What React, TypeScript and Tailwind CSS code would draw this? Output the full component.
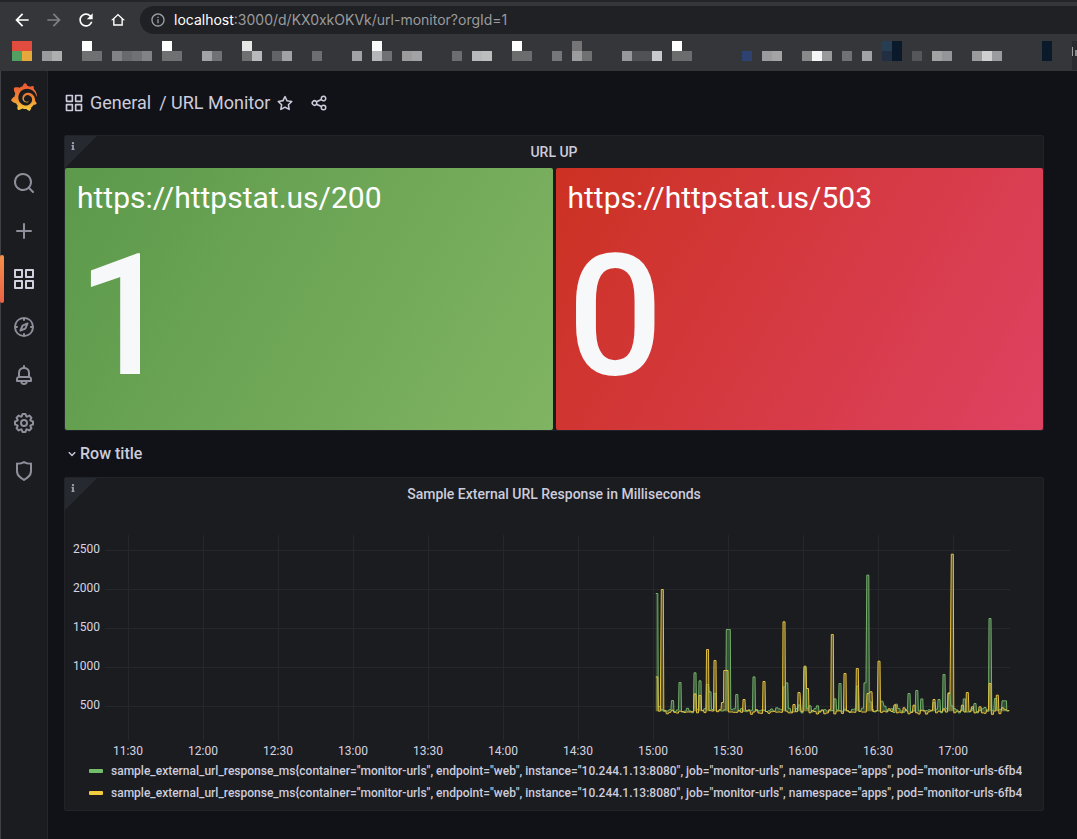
import { FaInfo } from "react-icons/fa";
import { MdArrowBack, MdArrowForward, MdInfoOutline, MdRefresh } from "react-icons/md";
import { SiGrafana } from "react-icons/si";

const paths = {
  apps: "M10,13H3a1,1,0,0,0-1,1v7a1,1,0,0,0,1,1h7a1,1,0,0,0,1-1V14A1,1,0,0,0,10,13ZM9,20H4V15H9ZM21,2H14a1,1,0,0,0-1,1v7a1,1,0,0,0,1,1h7a1,1,0,0,0,1-1V3A1,1,0,0,0,21,2ZM20,9H15V4h5Zm1,4H14a1,1,0,0,0-1,1v7a1,1,0,0,0,1,1h7a1,1,0,0,0,1-1V14A1,1,0,0,0,21,13Zm-1,7H15V15h5ZM10,2H3A1,1,0,0,0,2,3v7a1,1,0,0,0,1,1h7a1,1,0,0,0,1-1V3A1,1,0,0,0,10,2ZM9,9H4V4H9Z",
  search: "M21.71,20.29,18,16.61A9,9,0,1,0,16.61,18l3.68,3.68a1,1,0,0,0,1.42,0A1,1,0,0,0,21.71,20.29ZM11,18a7,7,0,1,1,7-7A7,7,0,0,1,11,18Z",
  plus: "M19,11H13V5a1,1,0,0,0-2,0v6H5a1,1,0,0,0,0,2h6v6a1,1,0,0,0,2,0V13h6a1,1,0,0,0,0-2Z",
  compass: "M12,2A10,10,0,1,0,22,12,10,10,0,0,0,12,2Zm1,17.93V19a1,1,0,0,0-2,0v.93A8,8,0,0,1,4.07,13H5a1,1,0,0,0,0-2H4.07A8,8,0,0,1,11,4.07V5a1,1,0,0,0,2,0V4.07A8,8,0,0,1,19.93,11H19a1,1,0,0,0,0,2h.93A8,8,0,0,1,13,19.93ZM15.14,7.55l-5,2.12a1,1,0,0,0-.52.52l-2.12,5a1,1,0,0,0,.21,1.1,1,1,0,0,0,.7.3.93.93,0,0,0,.4-.09l5-2.12a1,1,0,0,0,.52-.52l2.12-5a1,1,0,0,0-1.31-1.31Zm-2.49,5.1-2.28,1,1-2.28,2.28-1Z",
  bell: "M18,13.18V10a6,6,0,0,0-5-5.91V3a1,1,0,0,0-2,0V4.09A6,6,0,0,0,6,10v3.18A3,3,0,0,0,4,16v2a1,1,0,0,0,1,1H8.14a4,4,0,0,0,7.72,0H19a1,1,0,0,0,1-1V16A3,3,0,0,0,18,13.18ZM8,10a4,4,0,0,1,8,0v3H8Zm4,10a2,2,0,0,1-1.72-1h3.44A2,2,0,0,1,12,20Zm6-3H6V16a1,1,0,0,1,1-1H17a1,1,0,0,1,1,1Z",
  cog: "M21.32,9.55l-1.89-.63.89-1.78A1,1,0,0,0,20.13,6L18,3.87a1,1,0,0,0-1.15-.19l-1.78.89-.63-1.89A1,1,0,0,0,13.5,2h-3a1,1,0,0,0-.95.68L8.92,4.57,7.14,3.68A1,1,0,0,0,6,3.87L3.87,6a1,1,0,0,0-.19,1.15l.89,1.78-1.89.63A1,1,0,0,0,2,10.5v3a1,1,0,0,0,.68.95l1.89.63-.89,1.78A1,1,0,0,0,3.87,18L6,20.13a1,1,0,0,0,1.15.19l1.78-.89.63,1.89a1,1,0,0,0,.95.68h3a1,1,0,0,0,.95-.68l.63-1.89,1.78.89A1,1,0,0,0,18,20.13L20.13,18a1,1,0,0,0,.19-1.15l-.89-1.78,1.89-.63A1,1,0,0,0,22,13.5v-3A1,1,0,0,0,21.32,9.55ZM20,12.78l-1.2.4A2,2,0,0,0,17.64,16l.57,1.14-1.1,1.1L16,17.64a2,2,0,0,0-2.79,1.16l-.4,1.2H11.22l-.4-1.2A2,2,0,0,0,8,17.64l-1.14.57-1.1-1.1L6.36,16A2,2,0,0,0,5.2,13.18L4,12.78V11.22l1.2-.4A2,2,0,0,0,6.36,8L5.79,6.89l1.1-1.1L8,6.36A2,2,0,0,0,10.82,5.2l.4-1.2h1.56l.4,1.2A2,2,0,0,0,16,6.36l1.14-.57,1.1,1.1L17.64,8a2,2,0,0,0,1.16,2.79l1.2.4ZM12,8a4,4,0,1,0,4,4A4,4,0,0,0,12,8Zm0,6a2,2,0,1,1,2-2A2,2,0,0,1,12,14Z",
  shield: "M19.63,3.65a1,1,0,0,0-.84-.2,8,8,0,0,1-6.22-1.27,1,1,0,0,0-1.14,0A8,8,0,0,1,5.21,3.45a1,1,0,0,0-.84.2A1,1,0,0,0,4,4.43v7.45a9,9,0,0,0,3.77,7.33l3.65,2.6a1,1,0,0,0,1.16,0l3.65-2.6A9,9,0,0,0,20,11.88V4.43A1,1,0,0,0,19.63,3.65ZM18,11.88a7,7,0,0,1-2.93,5.7L12,19.77,8.93,17.58A7,7,0,0,1,6,11.88V5.58a10,10,0,0,0,6-1.39,10,10,0,0,0,6,1.39Z",
  star: "M22,9.67A1,1,0,0,0,21.14,9l-5.69-.83L12.9,3a1,1,0,0,0-1.8,0L8.55,8.16,2.86,9a1,1,0,0,0-.81.68,1,1,0,0,0,.25,1l4.13,4-1,5.68A1,1,0,0,0,6.9,21.44L12,18.77l5.1,2.67a.93.93,0,0,0,.46.12,1,1,0,0,0,.59-.19,1,1,0,0,0,.4-1l-1-5.68,4.13-4A1,1,0,0,0,22,9.67Zm-6.15,4a1,1,0,0,0-.29.88l.72,4.2-3.76-2a1.06,1.06,0,0,0-.94,0l-3.76,2,.72-4.2a1,1,0,0,0-.29-.88l-3-3,4.21-.61a1,1,0,0,0,.76-.55L12,5.7l1.88,3.82a1,1,0,0,0,.76.55l4.21.61Z",
  share: "M18,14a4,4,0,0,0-3.08,1.48l-5.1-2.35a3.64,3.64,0,0,0,0-2.26l5.1-2.35A4,4,0,1,0,14,6a4.17,4.17,0,0,0,.07.71L8.79,9.14a4,4,0,1,0,0,5.72l5.28,2.43A4.17,4.17,0,0,0,14,18a4,4,0,1,0,4-4ZM18,4a2,2,0,1,1-2,2A2,2,0,0,1,18,4ZM6,14a2,2,0,1,1,2-2A2,2,0,0,1,6,14Zm12,6a2,2,0,1,1,2-2A2,2,0,0,1,18,20Z",
  angleDown: "M17,9.17a1,1,0,0,0-1.41,0L12,12.71,8.46,9.17a1,1,0,0,0-1.41,0,1,1,0,0,0,0,1.42l4.24,4.24a1,1,0,0,0,1.42,0L17,10.59A1,1,0,0,0,17,9.17Z",
  home: "M12 5.2l5.2 5V18.400H6.800V10.200l5.200-5M12 2.500L1.500 12.500H4.700V20.500H19.300V12.500H22.500L12 2.500z",
};

function Icon({ name, className }: { name: keyof typeof paths; className: string }) {
  return (
    <svg viewBox="0 0 24 24" fill="currentColor" aria-hidden="true" className={className}>
      <path d={paths[name]} />
    </svg>
  );
}

/* Bookmark tiles: x, row (0 top, 1 bottom), width, colour */
const tiles: [number, number, number, string][] = [
  [12, 0, 20, "#e24c3f"], [12, 1, 10, "#53a063"], [22, 1, 10, "#e6a83b"],
  [42, 1, 10, "#9a9a9c"], [52, 1, 10, "#adaeb0"],
  [82, 0, 10, "#ffffff"], [82, 1, 20, "#6f7072"],
  [112, 1, 10, "#828284"], [122, 1, 10, "#68696d"], [132, 1, 10, "#707174"], [142, 1, 10, "#828284"],
  [162, 0, 10, "#ffffff"], [162, 1, 20, "#6f7072"],
  [202, 1, 10, "#a2a2a5"], [212, 1, 10, "#707174"],
  [242, 0, 10, "#e6e6e6"], [242, 1, 10, "#6f7072"], [252, 1, 10, "#b8b9bb"],
  [272, 1, 10, "#626367"], [282, 1, 10, "#a2a2a5"], [312, 1, 10, "#6d6e71"], [352, 1, 10, "#a2a2a5"],
  [372, 0, 10, "#fafafa"], [372, 1, 10, "#b5b6b9"], [382, 1, 10, "#6f7072"],
  [402, 1, 10, "#9b9b9d"], [412, 1, 10, "#a2a2a5"], [452, 1, 10, "#6c6d6f"],
  [472, 1, 10, "#b8b8ba"], [482, 1, 10, "#bcbdbf"],
  [512, 0, 10, "#ffffff"], [512, 1, 20, "#6b6c6e"], [552, 1, 10, "#757679"],
  [572, 0, 10, "#757577"], [572, 1, 10, "#9c9c9e"], [582, 1, 10, "#6f7072"],
  [622, 1, 10, "#979799"], [632, 1, 20, "#505154"], [652, 1, 10, "#c8c9cb"],
  [672, 0, 10, "#ffffff"], [672, 1, 20, "#6b6c6e"],
  [742, 1, 10, "#2e4272"], [762, 1, 10, "#9b9b9d"], [772, 1, 10, "#a4a4a6"],
  [802, 1, 10, "#88898b"], [812, 1, 10, "#f6f6f6"], [822, 1, 10, "#98999b"],
  [842, 1, 10, "#707174"], [862, 1, 10, "#a2a2a5"],
  [882, 0, 10, "#263d52"], [882, 1, 10, "#222e42"], [892, 0, 10, "#0a1a2a"], [892, 1, 10, "#0a1a2a"],
  [912, 1, 10, "#55565a"], [932, 1, 10, "#a2a2a5"], [942, 1, 10, "#949597"],
  [972, 1, 10, "#9b9b9d"], [982, 1, 10, "#cfcfcf"], [992, 1, 10, "#9b9b9d"],
  [1042, 0, 10, "#0a1a2a"], [1042, 1, 10, "#0a1a2a"],
];

function BrowserBar() {
  return (
    <header className="overflow-hidden border-t-2 border-[#242528] bg-[#35363a]">
      <div className="flex items-center pt-1 pl-3 text-white">
        <div className="flex items-center gap-3">
          <button aria-label="Back"><MdArrowBack className="size-5" /></button>
          <button aria-label="Forward" className="text-[#808184]"><MdArrowForward className="size-5" /></button>
          <button aria-label="Reload"><MdRefresh className="size-5" /></button>
          <button aria-label="Home" className="grid size-5 place-items-center"><Icon name="home" className="size-4" /></button>
        </div>
        <label className="ml-3 flex h-7 flex-1 items-center rounded-l-full bg-[#202124] pl-2.5 font-['Inter','Roboto',sans-serif] text-sm">
          <MdInfoOutline className="mr-2 size-4 text-[#9aa0a6]" />
          <span>localhost</span>
          <input aria-label="Address" defaultValue=":3000/d/KX0xkOKVk/url-monitor?orgId=1" className="min-w-0 flex-1 bg-transparent text-[#9a9b9e] outline-none" />
        </label>
      </div>
      <svg width="1077" height="37" viewBox="0 34 1077 37" shapeRendering="crispEdges" aria-hidden="true" className="block">
        {tiles.map(([x, row, w, fill]) => (
          <rect key={`${x}-${row}`} x={x} y={41 + row * 10} width={w} height="10" fill={fill} />
        ))}
        <rect x="1072" y="41" width="5" height="29" fill="#2a2b2e" />
        <rect x="1072" y="47" width="1" height="9" fill="#a0a0a2" />
        <rect x="1075" y="50" width="2" height="6" fill="#8a8b8d" />
      </svg>
    </header>
  );
}

const navItems: { name: keyof typeof paths; label: string; active?: boolean }[] = [
  { name: "search", label: "Search dashboards" },
  { name: "plus", label: "Create" },
  { name: "apps", label: "Dashboards", active: true },
  { name: "compass", label: "Explore" },
  { name: "bell", label: "Alerting" },
  { name: "cog", label: "Configuration" },
  { name: "shield", label: "Server Admin" },
];

function Sidebar() {
  return (
    <nav className="w-[47px] shrink-0 border-r border-[#25272b] bg-[#1b1c20]">
      <a href="#home" aria-label="Grafana" className="mb-12 flex justify-center pt-3">
        <svg width="0" height="0" className="absolute">
          <linearGradient id="flame" x1="0" y1="0" x2="0" y2="1">
            <stop offset="0.1" stopColor="#ec5b33" />
            <stop offset="0.55" stopColor="#f08a35" />
            <stop offset="1" stopColor="#f9cf3a" />
          </linearGradient>
        </svg>
        <SiGrafana fill="url(#flame)" className="size-7" />
      </a>
      {navItems.map((item) => (
        <a
          key={item.name}
          href={`#${item.name}`}
          aria-label={item.label}
          className={
            item.active
              ? "relative flex h-12 items-center justify-center text-[#d0d0de]"
              : "flex h-12 items-center justify-center text-[#8f8f9b]"
          }
        >
          {item.active && (
            <span className="absolute top-0 -left-px h-full w-1 rounded-xs bg-linear-to-b from-[#f59049] to-[#ec6147]" />
          )}
          <Icon name={item.name} className="size-6" />
        </a>
      ))}
    </nav>
  );
}

function PanelHeader({ title }: { title: string }) {
  return (
    <div className="relative flex h-8 items-center justify-center">
      <span className="absolute top-0 left-0 size-8 bg-[#262930] [clip-path:polygon(0_0,100%_0,0_100%)]" />
      <FaInfo aria-hidden="true" className="absolute top-1.5 left-1 size-2 text-[#a0a0ae]" />
      <h2 className="text-sm font-medium">{title}</h2>
    </div>
  );
}

const stats = [
  { title: "https://httpstat.us/200", value: "1", fill: "bg-[linear-gradient(120deg,#5c994b,#80b462)]" },
  { title: "https://httpstat.us/503", value: "0", fill: "bg-[linear-gradient(120deg,#cc3122,#de4262)]" },
];

/* Chart geometry */
const toX = (minute: number) => 575 + minute * 2.5;
const toY = (ms: number) => 196.500 - (ms - 500) * 0.078;

/* Outliers, as [minute, response in ms] */
const greenPeaks: [number, number][] = [
  [6.7, 1949], [7.7, 500], [13, 577], [16, 808], [22, 932], [24, 829], [27, 782], [28, 688], [30, 667],
  [34.9, 1487], [35.7, 1487], [38.7, 654], [45.6, 880], [54.7, 483], [57.7, 752], [58.7, 803],
  [63.7, 521], [66, 1000], [68, 509], [71, 509], [78, 598], [80, 795], [87, 761], [90, 803],
  [91.1, 2184], [92.1, 560], [96.7, 568], [98, 504], [102.5, 530], [107.6, 667], [110.7, 705],
  [112.7, 598], [117.6, 551], [119.6, 590], [121.6, 910], [123.6, 675], [124.7, 509], [129.7, 598],
  [134, 538], [138, 487], [140, 1628], [142.2, 603], [145.2, 573], [146.2, 573],
];
const yellowPeaks: [number, number][] = [
  [6.7, 880], [7.7, 440], [8.9, 2000], [22, 662], [24, 641], [27, 1231], [30, 1090], [33, 551], [33.900, 962],
  [34.8, 962], [41.6, 590], [49.6, 821], [57.6, 1586], [61.6, 526], [63.6, 680], [66, 1017],
  [67, 731], [76.9, 1423], [82, 923], [86.9, 987], [91.2, 667], [92.4, 688], [95.6, 1081],
  [99.6, 470], [102, 521], [105.6, 483], [109.6, 517], [117.6, 590], [121.6, 470], [123.600, 667],
  [124.9, 2453], [129, 517], [130.9, 680], [133, 496], [136, 496], [140, 795], [142.9, 645],
  [145, 483], [147.3, 449],
];

/* Fills the minutes between outliers with ordinary samples and draws the steps */
function tracePath(peaks: [number, number][], base: number, seed: number) {
  const points: [number, number][] = [];
  peaks.forEach(([m, ms], i) => {
    points.push([m, ms]);
    const next = i + 1 < peaks.length ? peaks[i + 1][0] : 148;
    const count = Math.round(next - m) - 1;
    for (let k = 1; k <= count; k++) {
      const t = m + ((next - m) * k) / (count + 1);
      points.push([t, base + Math.sin(t * 1.7 + seed) * 16 + Math.sin(t * 4.3 + seed * 2) * 15]);
    }
  });
  return points
    .map(([m, ms], i) => `${i ? "L" : "M"}${toX(m - 0.400).toFixed(1)} ${toY(ms).toFixed(1)}H${toX(m + 0.400).toFixed(1)}`)
    .join("");
}

const greenLine = tracePath(greenPeaks, 448, 1);
const yellowLine = tracePath(yellowPeaks, 430, 4);
const closeArea = `V${toY(440)}H${toX(6.3)}Z`;

const yTicks = [2500, 2000, 1500, 1000, 500];
const xTicks = ["11:30", "12:00", "12:30", "13:00", "13:30", "14:00", "14:30", "15:00", "15:30", "16:00", "16:30", "17:00"];

function ResponseChart() {
  return (
    <svg viewBox="0 0 978 250" role="img" aria-label="Response time chart" className="block w-full">
      <g stroke="#26272b" shapeRendering="crispEdges">
        {yTicks.map((t, i) => <line key={t} x1="40" x2="945" y1={40.500 + i * 39} y2={40.500 + i * 39} />)}
        {xTicks.map((t, i) => <line key={t} x1={63.500 + i * 75} x2={63.500 + i * 75} y1="25" y2="231" />)}
      </g>
      <g fill="#d4d4e2" fontSize="12">
        {yTicks.map((t, i) => <text key={t} x="35" y={43 + i * 39} textAnchor="end">{t}</text>)}
        {xTicks.map((t, i) => <text key={t} x={63 + i * 75} y="245" textAnchor="middle">{t}</text>)}
      </g>
      <g fillOpacity="0.3">
        <path d={greenLine + closeArea} fill="#73bf69" />
        <path d={yellowLine + closeArea} fill="#f2cc3d" />
      </g>
      <g fill="none" strokeWidth="1" strokeLinejoin="round">
        <path d={greenLine} stroke="#73b069" />
        <path d={yellowLine} stroke="#e3c040" />
      </g>
    </svg>
  );
}

const seriesLabel =
  'sample_external_url_response_ms{container="monitor-urls", endpoint="web", instance="10.244.1.13:8080", job="monitor-urls", namespace="apps", pod="monitor-urls-6fb4';

export default function App() {
  return (
    <div className="flex min-h-screen flex-col bg-[#111217] font-['Roboto',sans-serif] text-[#ccccdc]">
      <BrowserBar />
      <div className="flex flex-1 border-l border-[#404146]">
        <Sidebar />
        <main className="min-w-0 flex-1 pr-[33px] pl-4">
          <div className="flex h-16 items-center text-lg">
            <Icon name="apps" className="mr-1.5 size-5" />
            <h1 className="flex gap-2">
              <a href="#general">General</a>
              <a href="#dashboard">/ URL Monitor</a>
            </h1>
            <button aria-label="Mark as favorite" className="ml-1.5"><Icon name="star" className="size-[18px]" /></button>
            <button aria-label="Share dashboard" className="ml-4"><Icon name="share" className="size-[18px]" /></button>
          </div>

          <section className="rounded-xs border border-[#222328] bg-[#1b1c20]">
            <PanelHeader title="URL UP" />
            <div className="grid grid-cols-2 gap-[3px]">
              {stats.map((s) => (
                <div key={s.title} className={`h-[262px] rounded-xs px-3 pt-2 text-[#f7f8fa] ${s.fill}`}>
                  <div className="text-[30px] leading-11 text-white">{s.title}</div>
                  <div className="text-[168px] leading-[194px] font-medium">{s.value}</div>
                </div>
              ))}
            </div>
          </section>

          <button className="flex h-[46px] items-center text-base font-medium">
            <Icon name="angleDown" className="size-4" />
            Row title
          </button>

          <section className="rounded-xs border border-[#222328] bg-[#1b1c20] pb-1.5">
            <PanelHeader title="Sample External URL Response in Milliseconds" />
            <ResponseChart />
            <ul className="mr-2 ml-6 text-xs leading-[22px] font-medium">
              <li className="flex items-center gap-2">
                <span className="h-1 w-3.5 shrink-0 rounded-[1px] bg-[#73bf69]" />
                <span className="overflow-hidden whitespace-nowrap">{seriesLabel}</span>
              </li>
              <li className="flex items-center gap-2">
                <span className="h-1 w-3.5 shrink-0 rounded-[1px] bg-[#f2cc3d]" />
                <span className="overflow-hidden whitespace-nowrap">{seriesLabel}</span>
              </li>
            </ul>
          </section>
        </main>
      </div>
    </div>
  );
}
